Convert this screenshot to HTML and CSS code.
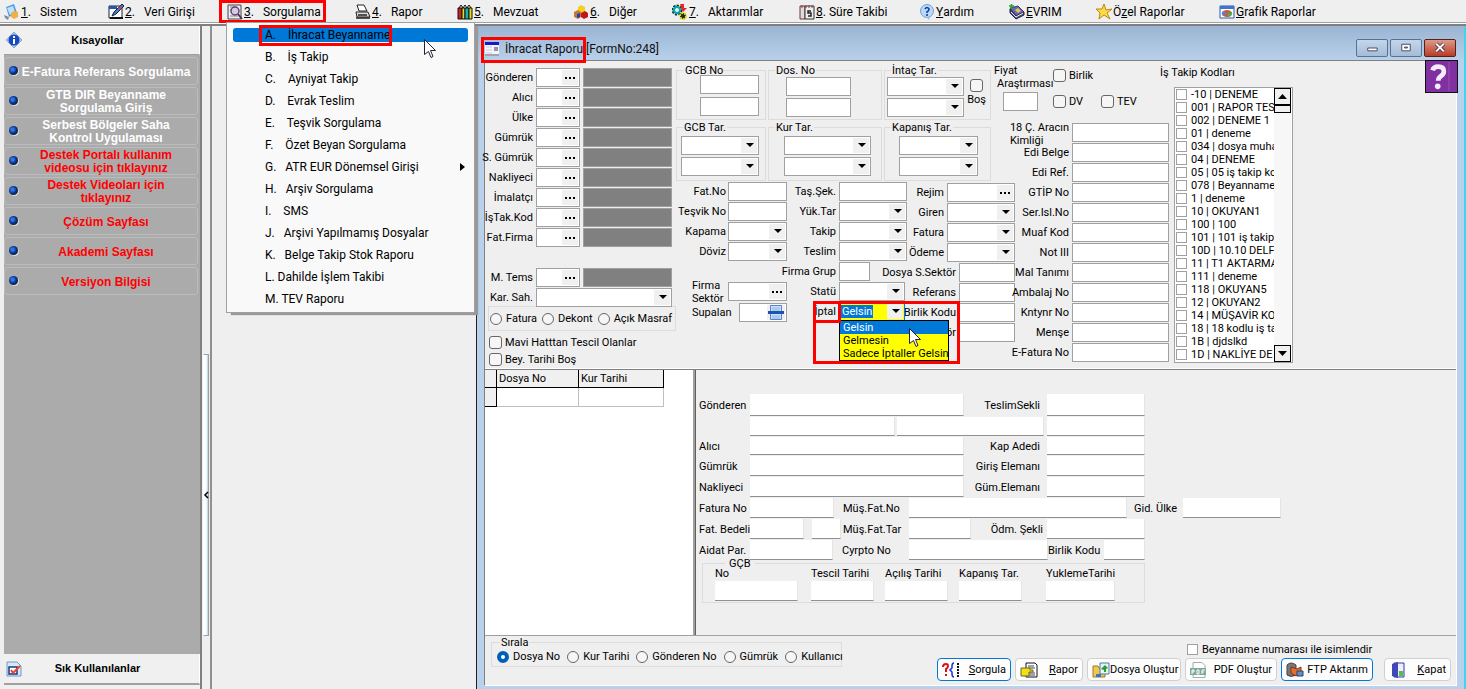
FILE: index.html
```html
<!DOCTYPE html>
<html lang="tr">
<head>
<meta charset="utf-8">
<title>İhracat Raporu</title>
<link rel="stylesheet" href="styles.css">
</head>
<body>
<nav class="menubar">
  <button><svg viewBox="0 0 16 16"><path d="M2 3l8-3 3 9-8 4z" fill="#4f9be8"/><path d="M3 4l6-2 2 6-5 3z" fill="#bfe2ff"/><path d="M7 9l3-2 4 1v5l-4 2-3-2z" fill="#f0b040"/><path d="M0 11l5 2-1 3-3-2z" fill="#889"/></svg><u>1</u>.<span>Sistem</span></button>
  <button><svg viewBox="0 0 16 16"><path d="M1 2h13v12H1z" fill="#fff" stroke="#124"/><path d="M1 2h8v3H1z" fill="#2858a8"/><path d="M4 12l2-4 8-8 2 2-8 8z" fill="#4a78c8" stroke="#123"/><path d="M11 3l2 2" stroke="#e33" stroke-width="2"/><path d="M2 14h13" stroke="#111" stroke-width="2"/></svg><u>2</u>.<span>Veri Girişi</span></button>
  <button class="marked"><svg viewBox="0 0 16 16"><path d="M1 1h13v14H1z" fill="#eee" stroke="#444"/><path d="M3 3h6M3 6h3M3 12h8" stroke="#888"/><circle cx="8" cy="7" r="4" fill="#d8c8e8" stroke="#604070" stroke-width="1.5"/><path d="M11 10l4 5" stroke="#503050" stroke-width="2"/></svg><u>3</u>.<span>Sorgulama</span></button>
  <button><svg viewBox="0 0 16 16"><path d="M4 7l-2-6h7l3 6z" fill="#fff" stroke="#222"/><path d="M1 8h12l2 5H2z" fill="#ddd" stroke="#222"/><path d="M1 14h14M3 11h9" stroke="#222" stroke-width="1.5"/></svg><u>4</u>.<span>Rapor</span></button>
  <button><svg viewBox="0 0 16 16"><path d="M1 4h4v11H1z" fill="#c22" stroke="#111"/><path d="M5 4h3v11H5z" fill="#dd2" stroke="#111"/><path d="M8 4h4v11H8z" fill="#19b0b0" stroke="#111"/><path d="M12 4h3v11h-3z" fill="#dd2" stroke="#111"/><path d="M2 4l2-3 2 3 2-3 2 3 2-3 2 3" fill="none" stroke="#111"/></svg><u>5</u>.<span>Mevzuat</span></button>
  <button><svg viewBox="0 0 16 16"><path d="M5 3l3-2 4 2v5l-4 2-3-2z" fill="#f4d020"/><path d="M1 8l4-2 3 2v5l-3 2-4-2z" fill="#c87830"/><path d="M8 9l4-2 3 2v4l-4 2-3-2z" fill="#c01818"/><path d="M4 10l3-1v4l-3 1z" fill="#203ac0"/></svg><u>6</u>.<span>Diğer</span></button>
  <button><svg viewBox="0 0 16 16"><circle cx="5" cy="6" r="4" fill="none" stroke="#133" stroke-width="3" stroke-dasharray="2 1"/><circle cx="5" cy="6" r="3" fill="none" stroke="#0aa" stroke-width="2"/><path d="M8 0h4v4h3l-4 4-2-4V3z" fill="#e22"/><circle cx="11" cy="12" r="3" fill="#222" stroke="#dd0" stroke-width="2" stroke-dasharray="2 1"/></svg><u>7</u>.<span>Aktarımlar</span></button>
  <button class="tight"><svg viewBox="0 0 16 16"><path d="M1 2h5v13H1z" fill="#ddd" stroke="#733"/><path d="M6 2h9v13H6z" fill="#eee" stroke="#333"/><path d="M7 1v3M10 1v3M13 1v3M3 1v3" stroke="#844"/><path d="M12 7H9v2h3v3H9" fill="none" stroke="#222" stroke-width="1.5"/></svg><u>8</u>.<span>Süre Takibi</span></button>
  <button><svg viewBox="0 0 16 16"><circle cx="8" cy="7" r="6.500" fill="#bcd8f4" stroke="#6fa0d8"/><path d="M7 13l3 3 1-4z" fill="#9cc0e8"/><path d="M6 5q2-3 4 0q0 2-2 3v1M8 10v2" fill="none" stroke="#1040a0" stroke-width="1.600"/></svg><u>Y</u>ardım</button>
  <button><svg viewBox="0 0 16 16"><path d="M1 4l8-2 6 6-8 4z" fill="#6068b8" stroke="#333a80"/><path d="M1 5v4l6 6 8-4V8l-8 4z" fill="#4850a0" stroke="#223"/><path d="M2 8l5 5 7-4" fill="none" stroke="#eee"/><path d="M6 6l3-2 3 3-3 2z" fill="#f0c040"/><path d="M0 2h5M2.500 0v5" stroke="#2a2" stroke-width="1.500"/></svg><u>E</u>VRIM</button>
  <button><svg viewBox="0 0 16 16"><path d="M8 0l2 6 6-1-5 4 3 6-6-4-5 4 1-6-4-4 6 0z" fill="#ffd84a" stroke="#b88a10"/></svg>Ö<u>z</u>el Raporlar</button>
  <button><svg viewBox="0 0 16 16"><path d="M1 2h14v12H1z" fill="#fff" stroke="#2858a8"/><path d="M1 2h14v3H1z" fill="#3a78d0"/><ellipse cx="8" cy="9.500" rx="5" ry="3.500" fill="#e05030"/><path d="M8 9l5-1a5 4 0 0 1-4 5z" fill="#50a850"/><path d="M8 9L4 7a5 4 0 0 0 0 5z" fill="#5a80d0"/></svg><u>G</u>rafik Raporlar</button>
</nav>

<main class="workspace">
  <aside class="sidebar">
    <h2><svg viewBox="0 0 16 16"><path d="M8 0l8 8-8 8-8-8z" fill="#a8c8f0" stroke="#90a8c8"/><circle cx="8" cy="8" r="5.500" fill="#1848c0"/><path d="M8 4v2M8 7v5" stroke="#fff" stroke-width="2"/></svg><span>Kısayollar</span></h2>
    <ul>
      <li><a href="#">E-Fatura Referans Sorgulama</a></li>
      <li><a href="#">GTB DIR Beyanname<br>Sorgulama Giriş</a></li>
      <li><a href="#">Serbest Bölgeler Saha<br>Kontrol Uygulaması</a></li>
      <li class="red"><a href="#">Destek Portalı kullanım<br>videosu için tıklayınız</a></li>
      <li class="red"><a href="#">Destek Videoları için<br>tıklayınız</a></li>
      <li class="red"><a href="#">Çözüm Sayfası</a></li>
      <li class="red"><a href="#">Akademi Sayfası</a></li>
      <li class="red"><a href="#">Versiyon Bilgisi</a></li>
    </ul>
    <h2 class="bottom"><svg viewBox="0 0 16 16"><path d="M1 1h10l4 4v10H1z" fill="#d8e8fa" stroke="#7098c8"/><path d="M3 6h8v7H3z" fill="#fff" stroke="#103a90" stroke-width="1.500"/><path d="M5 9l2 3 7-7" fill="none" stroke="#f04020" stroke-width="2"/></svg><span>Sık Kullanılanlar</span></h2>
  </aside>

  <div class="splitter"><button aria-label="Paneli daralt"><svg viewBox="0 0 6 8"><path d="M5 1L2 4l3 3" fill="none" stroke="#000" stroke-width="1.500"/></svg></button></div>

  <div class="desk">
  <section class="window">
    <header class="titlebar">
      <svg viewBox="0 0 14 14"><path d="M0 0h14v14H0z" fill="#f4f4fa"/><path d="M0 0h14v3H0z" fill="#1818c8"/><path d="M1 5h6M1 8h6M1 11h6" stroke="#ccd"/><path d="M9 6h4M9 8h4" stroke="#335"/><path d="M0 13h14" stroke="#555"/></svg>
      <h1><b>İhracat Raporu</b> [FormNo:248]</h1>
      <button aria-label="Küçült"><svg viewBox="0 0 30 17"><path d="M10.500 8.500h10v3h-10z" fill="#fff" stroke="#445"/></svg></button>
      <button aria-label="Büyüt"><svg viewBox="0 0 30 17"><path d="M10.500 4.500h9v7h-9z" fill="#fff" stroke="#445"/><path d="M13.500 7.500h3v1h-3z" fill="#9bb" stroke="#445"/></svg></button>
      <button class="close" aria-label="Kapat"><svg viewBox="0 0 30 17"><path d="M11 4l8 8M19 4l-8 8" stroke="#534" stroke-width="4"/><path d="M11 4l8 8M19 4l-8 8" stroke="#fff" stroke-width="2"/></svg></button>
    </header>

    <div class="client">
    <form class="filters">
      <div class="parties">
        <div class="party"><label for="p1">Gönderen</label><span class="lookup"><input id="p1"><button type="button" aria-label="Seç"></button></span><output></output></div>
        <div class="party"><label for="p2">Alıcı</label><span class="lookup"><input id="p2"><button type="button" aria-label="Seç"></button></span><output></output></div>
        <div class="party"><label for="p3">Ülke</label><span class="lookup"><input id="p3"><button type="button" aria-label="Seç"></button></span><output></output></div>
        <div class="party"><label for="p4">Gümrük</label><span class="lookup"><input id="p4"><button type="button" aria-label="Seç"></button></span><output></output></div>
        <div class="party"><label for="p5">S. Gümrük</label><span class="lookup"><input id="p5"><button type="button" aria-label="Seç"></button></span><output></output></div>
        <div class="party"><label for="p6">Nakliyeci</label><span class="lookup"><input id="p6"><button type="button" aria-label="Seç"></button></span><output></output></div>
        <div class="party"><label for="p7">İmalatçı</label><span class="lookup"><input id="p7"><button type="button" aria-label="Seç"></button></span><output></output></div>
        <div class="party"><label for="p8">İşTak.Kod</label><span class="lookup"><input id="p8"><button type="button" aria-label="Seç"></button></span><output></output></div>
        <div class="party"><label for="p9">Fat.Firma</label><span class="lookup"><input id="p9"><button type="button" aria-label="Seç"></button></span><output></output></div>
        <div class="party spaced"><label for="p10">M. Tems</label><span class="lookup"><input id="p10"><button type="button" aria-label="Seç"></button></span><output></output></div>
        <div class="party"><label for="p11">Kar. Sah.</label><span class="combo wide"><select id="p11"></select></span></div>
        <div class="radios">
          <label><input type="radio" name="tur">Fatura</label>
          <label><input type="radio" name="tur">Dekont</label>
          <label><input type="radio" name="tur">Açık Masraf</label>
        </div>
        <label class="check"><input type="checkbox">Mavi Hatttan Tescil Olanlar</label>
        <label class="check"><input type="checkbox">Bey. Tarihi Boş</label>
      </div>

      <div class="center">
        <div class="groups">
          <fieldset class="group g-no"><legend>GCB No</legend><input aria-label="GCB No başlangıç"><input aria-label="GCB No bitiş"></fieldset>
          <fieldset class="group g-dos"><legend>Dos. No</legend><input aria-label="Dos. No başlangıç"><input aria-label="Dos. No bitiş"></fieldset>
          <fieldset class="group g-int"><legend>İntaç Tar.</legend><span class="combo"><select aria-label="İntaç başlangıç"></select></span><span class="combo"><select aria-label="İntaç bitiş"></select></span><label class="empty"><input type="checkbox">Boş</label></fieldset>
          <fieldset class="group g-gt"><legend>GCB Tar.</legend><span class="combo"><select aria-label="GCB tarih başlangıç"></select></span><span class="combo"><select aria-label="GCB tarih bitiş"></select></span></fieldset>
          <fieldset class="group g-kt"><legend>Kur Tar.</legend><span class="combo"><select aria-label="Kur tarih başlangıç"></select></span><span class="combo"><select aria-label="Kur tarih bitiş"></select></span></fieldset>
          <fieldset class="group g-kp"><legend>Kapanış Tar.</legend><span class="combo"><select aria-label="Kapanış başlangıç"></select></span><span class="combo"><select aria-label="Kapanış bitiş"></select></span></fieldset>
        </div>
        <div class="fields">
          <div class="c1">
            <div class="field"><label for="a1">Fat.No</label><input id="a1"></div>
            <div class="field"><label for="a2">Teşvik No</label><input id="a2"></div>
            <div class="field"><label for="a3">Kapama</label><span class="combo"><select id="a3"></select></span></div>
            <div class="field"><label for="a4">Döviz</label><span class="combo"><select id="a4"></select></span></div>
            <div class="field spaced left"><label for="a5">Firma<br>Sektör</label><span class="lookup"><input id="a5"><button type="button" aria-label="Seç"></button></span></div>
            <div class="field left short"><label for="a6">Supalan</label><span class="lookup"><input id="a6"><svg viewBox="0 0 18 15"><path d="M3.500 .5h11v14h-11z" fill="#cfe4fa" stroke="#5a80c8"/><path d="M5 3h8M5 5h8M5 11h8M5 13h8" stroke="#7fb0e8"/><path d="M1 6h16v3H1z" fill="#2050b0"/></svg></span></div>
          </div>
          <div class="c2">
            <div class="field"><label for="b1">Taş.Şek.</label><input id="b1"></div>
            <div class="field"><label for="b2">Yük.Tar</label><span class="combo"><select id="b2"></select></span></div>
            <div class="field"><label for="b3">Takip</label><span class="combo"><select id="b3"></select></span></div>
            <div class="field"><label for="b4">Teslim</label><span class="combo"><select id="b4"></select></span></div>
            <div class="field half"><label for="b5">Firma Grup</label><input id="b5"></div>
            <div class="field statu"><label for="b6">Statü</label><span class="combo"><select id="b6"></select></span></div>
            <div class="field iptal"><label for="b7">İptal</label><span class="combo"><input id="b7" value="Gelsin"></span>
              <ul class="options" role="listbox"><li class="on" role="option">Gelsin</li><li role="option">Gelmesin</li><li role="option">Sadece İptaller Gelsin</li></ul>
              <i class="frame"></i>
              <svg class="pointer" viewBox="0 0 12 19"><path d="M.5.5v15l4-3 2.500 6 2-1-2.500-6h5z" fill="#fff" stroke="#223"/></svg>
            </div>
          </div>
          <div class="c3">
            <div class="field"><label for="d1">Rejim</label><span class="lookup"><input id="d1"><button type="button" aria-label="Seç"></button></span></div>
            <div class="field"><label for="d2">Giren</label><span class="combo"><select id="d2"></select></span></div>
            <div class="field"><label for="d3">Fatura</label><span class="combo"><select id="d3"></select></span></div>
            <div class="field"><label for="d4">Ödeme</label><span class="combo"><select id="d4"></select></span></div>
            <div class="field narrow"><label for="d5">Dosya S.Sektör</label><input id="d5"></div>
            <div class="field narrow"><label for="d6">Referans</label><input id="d6"></div>
            <div class="field narrow"><label for="d7">Birlik Kodu</label><input id="d7"></div>
            <div class="field narrow"><label for="d8">Sektör</label><input id="d8"></div>
          </div>
        </div>
      </div>

      <div class="codes">
        <div class="price">
          <label for="fiyat">Fiyat<br><span>Araştırması</span></label>
          <input id="fiyat">
          <label class="check birlik"><input type="checkbox">Birlik</label>
          <label class="check dv"><input type="checkbox">DV</label>
          <label class="check tev"><input type="checkbox">TEV</label>
        </div>
        <div class="field two"><label for="e1"><span>18 Ç. Aracın<br>Kimliği</span></label><input id="e1"></div>
        <div class="field"><label for="e2">Edi Belge</label><input id="e2"></div>
        <div class="field"><label for="e3">Edi Ref.</label><input id="e3"></div>
        <div class="field"><label for="e4">GTİP No</label><input id="e4"></div>
        <div class="field"><label for="e5">Ser.Isl.No</label><input id="e5"></div>
        <div class="field"><label for="e6">Muaf Kod</label><input id="e6"></div>
        <div class="field"><label for="e7">Not III</label><input id="e7"></div>
        <div class="field"><label for="e8">Mal Tanımı</label><input id="e8"></div>
        <div class="field"><label for="e9">Ambalaj No</label><input id="e9"></div>
        <div class="field"><label for="e10">Kntynr No</label><input id="e10"></div>
        <div class="field"><label for="e11">Menşe</label><input id="e11"></div>
        <div class="field"><label for="e12">E-Fatura No</label><input id="e12"></div>
      </div>

      <div class="jobs">
        <h3>İş Takip Kodları</h3>
        <div class="joblist">
          <div class="items">
            <label><input type="checkbox">-10 | DENEME</label>
            <label><input type="checkbox">001 | RAPOR TES</label>
            <label><input type="checkbox">002 | DENEME 1</label>
            <label><input type="checkbox">01 | deneme</label>
            <label><input type="checkbox">034 | dosya muha</label>
            <label><input type="checkbox">04 | DENEME</label>
            <label><input type="checkbox">05 | 05 iş takip ko</label>
            <label><input type="checkbox">078 | Beyanname</label>
            <label><input type="checkbox">1 | deneme</label>
            <label><input type="checkbox">10 | OKUYAN1</label>
            <label><input type="checkbox">100 | 100</label>
            <label><input type="checkbox">101 | 101 iş takip</label>
            <label><input type="checkbox">10D | 10.10 DELF</label>
            <label><input type="checkbox">11 | T1 AKTARMA</label>
            <label><input type="checkbox">111 | deneme</label>
            <label><input type="checkbox">118 | OKUYAN5</label>
            <label><input type="checkbox">12 | OKUYAN2</label>
            <label><input type="checkbox">14 | MÜŞAVİR KO</label>
            <label><input type="checkbox">18 | 18 kodlu iş ta</label>
            <label><input type="checkbox">1B | djdslkd</label>
            <label><input type="checkbox">1D | NAKLİYE DE</label>
          </div>
          <div class="scroll"><button type="button" aria-label="Yukarı"><svg viewBox="0 0 9 5"><path d="M0 5h9L4.500 0z"/></svg></button><i></i><button type="button" class="down" aria-label="Aşağı"><svg viewBox="0 0 9 5"><path d="M0 0h9L4.500 5z"/></svg></button></div>
        </div>
      </div>
      <button type="button" class="help" aria-label="Yardım"><svg viewBox="0 0 33 33"><path d="M7 10q1-4 6-4 6 0 6 5 0 3-3 5-3 2-3 5" fill="none" stroke="#f4ecf8" stroke-width="5"/><circle cx="12.500" cy="27" r="3" fill="#f4ecf8"/><path d="M24.500 1v31" stroke="#9a55b0"/></svg></button>
    </form>

    <div class="lower">
      <div class="gridpane">
        <table>
          <thead><tr><th class="gut"></th><th>Dosya No</th><th>Kur Tarihi</th></tr></thead>
          <tbody><tr><td class="gut"></td><td></td><td></td></tr></tbody>
        </table>
      </div>
      <div class="details">
        <div class="lines">
          <div class="line l1"><label for="f1">Gönderen</label><input id="f1"><label class="r" for="f2">TeslimSekli</label><input id="f2"></div>
          <div class="line l2"><span></span><input aria-label="Adres 1"><input aria-label="Adres 2"><input aria-label="Teslim yeri"></div>
          <div class="line l1"><label for="f3">Alıcı</label><input id="f3"><label class="r" for="f4">Kap Adedi</label><input id="f4"></div>
          <div class="line l1"><label for="f5">Gümrük</label><input id="f5"><label class="r" for="f6">Giriş Elemanı</label><input id="f6"></div>
          <div class="line l1"><label for="f7">Nakliyeci</label><input id="f7"><label class="r" for="f8">Güm.Elemanı</label><input id="f8"></div>
          <div class="line l6"><label for="f9">Fatura No</label><input id="f9"><label class="m" for="f10">Müş.Fat.No</label><input id="f10"><label class="g" for="f11">Gid. Ülke</label><input id="f11"></div>
          <div class="line l7"><label for="f12">Fat. Bedeli</label><input id="f12"><input aria-label="Döviz" class="cur"><label for="f13">Müş.Fat.Tar</label><input id="f13"><label class="r" for="f14">Ödm. Şekli</label><input id="f14"></div>
          <div class="line l8"><label for="f15">Aidat Par.</label><input id="f15"><label class="m" for="f16">Cyrpto No</label><input id="f16"><label for="f17">Birlik Kodu</label><input id="f17"></div>
        </div>
        <fieldset class="gcb">
          <legend>GÇB</legend>
          <label>No<input></label>
          <label>Tescil Tarihi<input></label>
          <label>Açılış Tarihi<input></label>
          <label>Kapanış Tar.<input></label>
          <label>YuklemeTarihi<input></label>
        </fieldset>
      </div>
    </div>

    <footer class="footer">
      <fieldset class="sort"><legend>Sırala</legend>
        <label><input type="radio" name="sirala" checked>Dosya No</label>
        <label><input type="radio" name="sirala">Kur Tarihi</label>
        <label><input type="radio" name="sirala">Gönderen No</label>
        <label><input type="radio" name="sirala">Gümrük</label>
        <label><input type="radio" name="sirala">Kullanıcı</label>
      </fieldset>
      <div class="actions">
        <label class="naming"><input type="checkbox">Beyanname numarası ile isimlendir</label>
        <button class="primary"><svg viewBox="0 0 18 16"><path d="M1 5q0-3 3-3 2 0 2 2 0 2-2 3v3M4 12v2" fill="none" stroke="#e01010" stroke-width="2"/><path d="M12 1q-2 0-2 3v2L8 8l2 2v2q0 3 2 3" fill="none" stroke="#2030d0" stroke-width="1.500"/><path d="M16 1v14" stroke="#111" stroke-width="2" stroke-dasharray="2 1"/></svg><span><u>S</u>orgula</span></button>
        <button><svg viewBox="0 0 18 16"><path d="M6 1h9l2 2v12H6z" fill="#fff" stroke="#111"/><path d="M8 4h6M8 6h7M8 11h7M8 13h7" stroke="#444"/><path d="M1 6h9v2h3v2H9v4H1z" fill="#f4e010" stroke="#663"/></svg><span><u>R</u>apor</span></button>
        <button><svg viewBox="0 0 18 16"><path d="M1 4h5l1 2h6v9H1z" fill="#f0c850" stroke="#a07820"/><path d="M8 1h9v11H8z" fill="#e8f2fa" stroke="#4878a8"/><path d="M9 7l4-4 3 3-2 1v3h-2V8z" fill="#28a028"/><path d="M4 12h5v3H4z" fill="#3878c0"/></svg><span>Dosya Oluştur</span></button>
        <button><svg viewBox="0 0 18 16"><path d="M3 .5h9l3 3v12H3z" fill="#fff" stroke="#9ab0a8"/><path d="M0 6h16v7H0z" fill="#7fa898"/><path d="M2 12V8h2v2H2M7 8v4h2V8H7M12 12V8h3M12 10h2" fill="none" stroke="#fff"/></svg><span>PDF Oluştur</span></button>
        <button class="primary"><svg viewBox="0 0 18 16"><path d="M1 3q4-4 9 0v10q-5 3-9 0z" fill="#777" stroke="#444"/><path d="M5 5l6 2 4-2v6l-5 3-5-3z" fill="#e07030" stroke="#903010"/><path d="M11 9h6v5h-6z" fill="#5a90d0" stroke="#345"/></svg><span>FTP Aktarım</span></button>
        <button class="quit"><svg viewBox="0 0 18 16"><path d="M5 1h10v14H5z" fill="#eef" stroke="#3038a0"/><path d="M3 2l6-2v16l-6-2z" fill="#4048b8"/><path d="M10 9h4v5h-4z" fill="#50c050"/></svg><span><u>K</u>apat</span></button>
      </div>
    </footer>
    </div>
  </section>
  </div>

  <div class="popup">
    <button class="hot"><b>A.&nbsp;&nbsp;&nbsp; İhracat Beyanname</b></button>
    <button>B.&nbsp;&nbsp;&nbsp; İş Takip</button>
    <button>C.&nbsp;&nbsp;&nbsp; Ayniyat Takip</button>
    <button>D.&nbsp;&nbsp;&nbsp; Evrak Teslim</button>
    <button>E.&nbsp;&nbsp;&nbsp; Teşvik Sorgulama</button>
    <button>F.&nbsp;&nbsp;&nbsp; Özet Beyan Sorgulama</button>
    <button class="sub">G.&nbsp;&nbsp; ATR EUR Dönemsel Girişi</button>
    <button>H.&nbsp;&nbsp; Arşiv Sorgulama</button>
    <button>I.&nbsp;&nbsp;&nbsp; SMS</button>
    <button>J.&nbsp;&nbsp; Arşivi Yapılmamış Dosyalar</button>
    <button>K.&nbsp;&nbsp; Belge Takip Stok Raporu</button>
    <button>L. Dahilde İşlem Takibi</button>
    <button>M. TEV Raporu</button>
    <svg class="pointer" viewBox="0 0 12 19"><path d="M.5.5v15l4-3 2.500 6 2-1-2.500-6h5z" fill="#fff" stroke="#223"/></svg>
  </div>
</main>
</body>
</html>
```

FILE: styles.css
```css
*, *::before, *::after { box-sizing: border-box; }
html, body { height: 100%; margin: 0; }
body {
  display: flex; flex-direction: column; min-height: 689px; overflow: hidden;
  background: #efefef; color: #000;
  font: 11px/13px Roboto, "Liberation Sans", Arial, sans-serif;
}
button, input, select { font: inherit; color: inherit; margin: 0; padding: 0; border-radius: 0; min-width: 0; }
button { border: 0; background: none; }
fieldset { margin: 0; padding: 0; min-width: 0; border: 1px solid #dcdcdc; }
legend { padding: 0 1px; }
ul { list-style: none; margin: 0; padding: 0; }
h1, h2, h3 { margin: 0; font: inherit; }
label { white-space: nowrap; }

/* menu bar */
.menubar {
  flex: none; height: 26px; padding-left: 4px; display: grid;
  grid-template-columns: 104px 119px 128px 102px 116px 99px 127px 120px 90px 87px 123px 1fr;
  align-items: start; border-bottom: 2px solid #808080;
  background: linear-gradient(#efefef 22px, #a0a0a0 22px, #a0a0a0 23px, #fff 23px);
  font-size: 12px; line-height: 22px;
}
.menubar button { display: flex; align-items: center; height: 22px; white-space: nowrap; padding-top: 1px; }
.menubar svg { width: 16px; height: 16px; margin-right: 1px; }
.menubar span { margin-left: 9px; }
.menubar .tight span { margin-left: 3px; }
.marked { position: relative; }
.marked::after { content: ""; position: absolute; left: -8px; top: 0; width: 107px; height: 23px; border: 3px solid #f00; }

.workspace { flex: 1; display: flex; position: relative; min-height: 0; }

/* sidebar */
.sidebar { display: flex; flex-direction: column; margin-left: 4px; width: 196px; background: #ababab; flex: none; }
.sidebar h2 {
  height: 29px; display: grid; grid-template-columns: 16px 1fr 24px; align-items: center; text-align: center;
  background: #f0f0f0; font-family: "Liberation Sans", Arial, sans-serif; font-weight: bold; padding: 0 2px; border-right: 1px solid #fff; border-bottom: 1px solid #a0a0a0;
}
.sidebar h2 svg { width: 16px; height: 16px; }
.sidebar ul { padding: 2px 2px 0 0; }
.sidebar li { position: relative; height: 28px; margin-bottom: 2px; border: 1px solid #bcbcbc; border-radius: 3px; display: flex; align-items: center; justify-content: center; padding: 2px 0 0 10px; }
.sidebar li::before { content: ""; position: absolute; left: 4px; top: 8px; width: 9px; height: 9px; border-radius: 50%; background: radial-gradient(circle at 40% 40%, #2a7ae8 15%, #0a2c80 50%, #123 75%); box-shadow: 1px 1px 0 #ddd; }
.sidebar a { color: #fff; font-family: "Liberation Sans", Arial, sans-serif; font-weight: bold; font-size: 12px; text-decoration: none; text-align: center; }
.sidebar .red a { color: #f00; }
.sidebar .bottom { margin-top: auto; height: 31px; margin-bottom: 4px; border-bottom: 2px solid #a0a0a0; box-shadow: 0 4px #f0f0f0; }

.splitter { flex: none; width: 12px; border-left: 2px solid #808080; border-right: 2px solid #909090; display: grid; grid-template-rows: 328fr 282fr 53fr; padding: 0 1px; }
.splitter button { grid-row: 2; border: 1px solid #a0a0a0; border-left-color: #fff; background: linear-gradient(90deg, #fff 50%, #b0d4e8); display: flex; align-items: center; justify-content: center; }
.splitter svg { width: 6px; height: 8px; flex: none; }

/* popup menu */
.popup {
  position: absolute; left: 226px; top: -4px; width: 249px; padding: 1px 6px 2px; display: flex; flex-direction: column;
  background: #f9f9f9; border: 1px solid #a0a0a0; box-shadow: 4px 3px 1px -1px #999; z-index: 3;
  font-size: 12px; line-height: 20px;
}
.popup button { height: 22px; text-align: left; padding-left: 32px; white-space: nowrap; }
.popup .hot { height: 14px; margin: 4px 0; background: #0078d7; border-radius: 3px; line-height: 14px; }
.hot b { position: relative; font-weight: normal; }
.hot b::after { content: ""; position: absolute; left: -6px; top: -3px; width: 133px; height: 21px; border: 3px solid #f00; }
.popup .sub { display: flex; align-items: center; justify-content: space-between; }
.sub::after { content: ""; border: 4px solid transparent; border-left: 5px solid #000; border-right: 0; margin-right: 3px; }
.pointer { position: absolute; left: 197px; top: 16px; width: 12px; height: 19px; }

/* window */
.desk { flex: 1; min-width: 0; display: flex; padding-left: 264px; }
.window { flex: 1; min-width: 0; display: flex; flex-direction: column; padding: 0 7px 3px 7px; border-left: 1px solid #222; border-right: 2px solid #3ad8f0; background: linear-gradient(#9ab4d3, #b9d1ea 35px); }
.titlebar { flex: none; height: 34px; display: flex; gap: 2px; padding: 14px 1px 3px 1px; align-items: center; font-size: 12px; line-height: 18px; }
.titlebar > svg { width: 14px; height: 14px; }
.titlebar h1 { flex: 1; padding-left: 4px; color: #111; white-space: nowrap; }
.titlebar h1 b { font-weight: normal; position: relative; }
.titlebar h1 b::after { content: ""; position: absolute; left: -24px; top: -5px; width: 105px; height: 26px; border: 3px solid #f00; }
.titlebar button { width: 32px; height: 18px; border: 1px solid #5a7290; border-radius: 2px; background: linear-gradient(#c4d6ea, #a4bcd8); margin-bottom: 2px; display: flex; }
.titlebar button svg { width: 30px; height: 16px; }
.titlebar .close { background: linear-gradient(#dd9a88, #b83c28); border-color: #5a2018; }
.client { flex: 1; min-height: 0; display: flex; flex-direction: column; background: #efefef; border: 1px solid #808080; border-right-color: #fff; border-bottom-color: #fff; }

/* shared fields */
.filters input:not([type]), .filters select, .filters output, .lookup {
  display: block; height: 19px; width: 100%; background: #fff; border: 1px solid #a0a0a0; outline: 0; padding: 0 2px;
}
.filters select { appearance: none; }
.combo { position: relative; display: block; }
.combo::before { content: ""; position: absolute; right: 2px; top: 2px; width: 16px; height: 15px; background: #f0f0f0; }
.combo::after { content: ""; position: absolute; right: 5px; top: 7px; border: 4px solid transparent; border-top-color: #000; border-bottom: 0; }
.filters .lookup { display: flex; padding: 1px; }
.filters .lookup input { flex: 1; border: 0; height: 15px; }
.lookup button { flex: none; width: 16px; height: 15px; background: #f0f0f0; display: flex; align-items: center; justify-content: center; }
.lookup button::before { content: ""; width: 2px; height: 2px; background: #000; box-shadow: -4px 0 #000, 4px 0 #000; }
.lookup svg { width: 18px; height: 15px; flex: none; background: #f0f0f0; }
input[type=checkbox], input[type=radio] { appearance: none; flex: none; width: 13px; height: 13px; margin: 0; border: 1px solid #666; border-radius: 3px; background: #f6f6f6; }
input[type=radio] { border-radius: 50%; }
input[type=radio]:checked { border: 4px solid #0060b8; background: #fff; }
.field { display: grid; grid-template-columns: minmax(0, 1fr) 59px; gap: 2px; height: 20px; }
.field > label { line-height: 20px; display: flex; justify-content: flex-end; }

.filters { flex: none; height: 308px; display: flex; padding-top: 7px; border-bottom: 1px solid #fff; position: relative; }
.parties { width: 191px; flex: none; }
.party { display: grid; grid-template-columns: 48px 44px 89px; column-gap: 3px; height: 20px; }
.party label { line-height: 20px; display: flex; justify-content: flex-end; }
.filters output { background: #808080; }
.party .wide { grid-column: 2 / 4; }
.party.spaced { margin-top: 20px; }
.radios { display: flex; gap: 5px; height: 25px; margin: -2px 0 0 3px; width: 188px; border: 1px solid #dcdcdc; align-items: center; padding-left: 1px; }
.radios label, .check { display: flex; align-items: center; gap: 4px; }
.radios input, .sort input { width: 12px; height: 12px; }
.check { height: 17px; padding-left: 4px; gap: 3px; }
.radios + .check { margin-top: 3px; }

.center { width: 340px; flex: none; }
.groups { display: grid; grid-template-columns: 90px 114px 107px; column-gap: 2px; width: 315px; }
.group { position: relative; display: grid; row-gap: 2px; align-content: start; margin-top: -4px; height: 56px; }
.group legend { line-height: 13px; }
.g-no { padding: 0 6px 0 23px; row-gap: 3px; }
.g-no legend { margin: 0 0 -2px -16px; }
.g-dos { padding: 0 30px 0 17px; }
.g-dos legend { margin-left: -11px; }
.g-int { padding: 0 26px 0 2px; }
.g-int legend { margin-left: 4px; }
.g-gt { padding: 2px 6px 0 4px; }
.g-gt legend { margin-left: 2px; }
.g-kt { padding: 2px 10px 0 15px; }
.g-kt legend { margin-left: -9px; }
.g-kp { padding: 2px 12px 0 14px; }
.g-kp legend { margin-left: -8px; }
.g-gt, .g-kt, .g-kp { height: 60px; margin-top: 1px; }
.empty { position: absolute; right: 4px; top: 2px; display: grid; justify-items: center; gap: 1px; }

.fields { display: grid; grid-template-columns: 111px 120px 108px; padding-top: 1px; }
.c1 .spaced { margin-top: 20px; }
.c1 .left label { justify-content: flex-start; padding-left: 16px; }
.c1 .spaced label { line-height: 13px; margin-top: -3px; }
.c1 .short { grid-template-columns: minmax(0, 1fr) 48px; padding-top: 1px; height: 21px; }
.c2 .field { grid-template-columns: minmax(0, 1fr) 68px; gap: 3px; }
.c2 .half { padding-right: 37px; grid-template-columns: minmax(0, 1fr) 31px; }
.statu .combo, .iptal .combo { margin-right: 2px; }
.c2 .iptal { position: relative; }
.filters .iptal input { color: #fff; border-color: #0078d7; background: linear-gradient(#0078d7, #0078d7) 1px 2px / 32px 13px no-repeat, #ff0; }
.options { position: absolute; left: 52px; top: 18px; width: 110px; background: #ff0; border: 1px solid #000; z-index: 1; }
.options li { padding-left: 3px; white-space: nowrap; }
.options .on { background: #0078d7; color: #fff; }
.frame { position: absolute; left: 26px; top: -1px; width: 147px; height: 63px; border: 3px solid #f00; z-index: 2; }
.frame::after { content: ""; position: absolute; left: -3px; top: -3px; width: 28px; height: 22px; border: 3px solid #f00; }
.iptal .pointer { left: 122px; top: 26px; z-index: 3; }
.c3 { padding-top: 1px; }
.c3 .field { grid-template-columns: minmax(0, 1fr) 68px; gap: 3px; }
.c3 .narrow { grid-template-columns: minmax(0, 1fr) 56px; }

.codes { width: 153px; flex: none; }
.codes .field { grid-template-columns: minmax(0, 1fr) 97px; gap: 3px; }
.codes .two > label { line-height: 13px; margin-top: -2px; }
.price { display: grid; grid-template-columns: 55px 48px 48px; grid-template-rows: 24px 31px; margin-left: -22px; height: 55px; align-items: start; }
.price > label:first-child { margin-top: -4px; }
.price > label span { padding-left: 3px; }
.filters .price input:not([type]) { width: 35px; margin-left: 9px; grid-row: 2; grid-column: 1; }
.price .birlik { grid-column: 2; grid-row: 1; margin-top: -1px; }
.price .dv, .price .tev { grid-row: 2; margin-top: 1px; }

.jobs { width: 119px; margin-left: 5px; flex: none; }
.jobs h3 { margin: -2px 0 7px -14px; line-height: 14px; }
.joblist { display: flex; height: 276px; background: #fff; border: 1px solid #a0a0a0; padding-right: 1px; }
.items { flex: 1; min-width: 0; overflow: hidden; }
.items label { display: flex; gap: 4px; height: 13px; padding-left: 1px; }
.items input, .naming input[type=checkbox] { width: 11px; height: 11px; border: 1px solid #a0a0a0; background: #fff; border-radius: 0; margin-top: 1px; }
.scroll { width: 17px; display: flex; flex-direction: column; background: #f7f7f7; }
.scroll button { height: 17px; border: 1px solid #000; background: #f0f0f0; display: flex; align-items: center; justify-content: center; }
.scroll svg { width: 9px; height: 5px; }
.scroll i { height: 8px; border: 1px solid #000; background: #f0f0f0; }
.scroll .down { margin-top: auto; }
.help { position: absolute; right: -2px; top: -1px; width: 33px; height: 33px; background: #8030a0; border: 1px solid #111; display: flex; }
.help svg { width: 31px; height: 31px; }

/* lower panes */
.lower { flex: 1; min-height: 0; display: grid; grid-template-columns: 210px 1fr; border-top: 1px solid #808080; border-bottom: 1px solid #a0a0a0; }
.gridpane { background: #fff; border-right: 2px solid #a0a0a0; }
table { border-collapse: separate; border-spacing: 0; width: 179px; table-layout: fixed; }
th { height: 18px; padding: 0 2px; text-align: left; font-weight: normal; background: #f0f0f0; border-right: 1px solid #000; border-bottom: 1px solid #000; }
td { height: 19px; padding: 0; border-right: 1px solid #c0c0c0; border-bottom: 1px solid #c0c0c0; }
.gut { width: 12px; background: #f0f0f0; border-right: 1px solid #000; border-bottom: 1px solid #000; }
th:nth-child(2) { width: 82px; }
.details { border-left: 1px solid #606060; padding: 24px 0 0 3px; min-width: 0; }
.lines { display: grid; grid-template-rows: 23px 20px 19px repeat(5, 21px); }
.line { display: grid; padding-bottom: 1px; }
.line label { align-self: center; }
.details input { width: 100%; height: 100%; background: #fff; border: 0; border-bottom: 1px solid #909090; border-right: 1px solid #e4e4e4; outline: 0; }
.l1 { grid-template-columns: 51px 214px 83px 98px; }
.l1 .r { text-align: right; padding-right: 7px; }
.l2 { grid-template-columns: 51px 145px 147px 98px; column-gap: 0; }
.l2 input:nth-child(3) { margin-left: 2px; width: 147px; }
.l2 input:nth-child(4) { margin-left: 5px; }
.l6 { grid-template-columns: 51px 84px 75px 218px 56px 98px; }
.l7 { grid-template-columns: 51px 54px 8px 29px 68px 62px 76px 98px; }
.l7 .cur { grid-column: 4; }
.l7 label:nth-of-type(2) { padding-left: 2px; }
.l7 .r { text-align: right; padding-right: 4px; }
.l8 { grid-template-columns: 51px 83px 76px 139px 56px 41px; }
.m { padding-left: 9px; }
.g { padding-left: 7px; }
.gcb { position: relative; display: flex; width: 443px; height: 46px; margin: -4px 0 0 3px; padding: 2px 0 0 12px; }
.gcb legend { margin-left: 10px; padding: 0 4px 0 4px; line-height: 13px; }
.gcb label { width: 83px; display: grid; grid-template-rows: 14px 20px; margin-top: -5px; margin-right: 13px; }
.gcb label + label { width: 63px; margin-right: 11px; }
.gcb label:last-child { margin-left: 13px; width: 66px; }

/* footer */
.footer { flex: none; height: 49px; display: flex; justify-content: space-between; padding: 0 5px 0 6px; }
.sort { display: flex; align-items: center; width: 351px; height: 31px; padding: 0 0 2px 5px; gap: 7px; }
.sort legend { margin-left: 3px; line-height: 13px; }
.sort label { display: flex; align-items: center; gap: 4px; }
.actions { display: grid; grid-template-columns: 74px 68px 94px 92px 92px 74px; column-gap: 4px; grid-template-rows: 14px 23px; row-gap: 1px; padding-top: 7px; }
.naming { grid-column: 4 / 7; display: flex; gap: 4px; padding-left: 2px; }
.actions button { grid-row: 2; border: 1px solid #d0d0d0; border-radius: 4px; background: #fdfdfd; display: flex; align-items: center; justify-content: space-between; padding: 0 4px; white-space: nowrap; }
.actions .primary { border-color: #0078d7; }
.actions .quit { margin-left: 7px; }
.actions svg { width: 18px; height: 16px; flex: none; }
```
